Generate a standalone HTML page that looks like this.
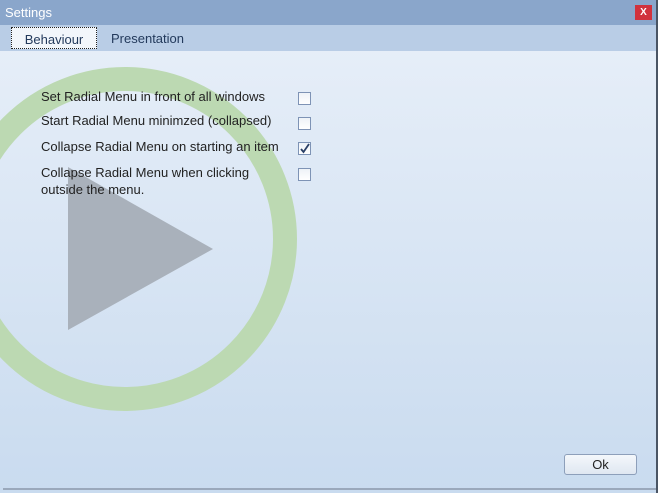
<!DOCTYPE html>
<html><head><meta charset="utf-8"><style>
body{margin:0;width:658px;height:493px;overflow:hidden;font-family:"Liberation Sans","Noto Sans CJK SC",sans-serif;background:#4a5564;}
.win{position:absolute;left:0;top:0;width:656px;height:493px;background:linear-gradient(#e9f0f9,#c9dbef);}
.title{position:absolute;left:0;top:0;width:656px;height:25px;background:#8aa6cb;color:#fff;font-size:13px;line-height:25px;padding-left:5px;box-sizing:border-box}
.x{position:absolute;right:4px;top:5px;width:17px;height:15px;background:#d1323d;color:#fff;font-size:10px;line-height:15px;text-align:center;font-weight:bold}
.tabs{position:absolute;left:0;top:25px;width:656px;height:26px;background:#b9cde6}
.tab{position:absolute;top:2px;height:22px;font-size:13px;color:#233a5c;line-height:24px}
.t1{left:11px;width:86px;background:#f2f6fb;border:1px dotted #222;box-sizing:border-box;text-align:center}
.t2{left:111px}
.lbl{position:absolute;left:41px;font-size:13px;color:#222;line-height:17px}
.cb{position:absolute;left:298px;width:13px;height:13px;border:1px solid #7e93b5;box-sizing:border-box;background:linear-gradient(#eef2f7,#fff)}
.ok{position:absolute;left:564px;top:454px;width:73px;height:21px;border:1px solid #8d9fba;border-radius:3px;box-sizing:border-box;background:linear-gradient(#f4f7fb,#dfe7f1);text-align:center;font-size:13px;line-height:19px;color:#222}
.bot{position:absolute;left:3px;top:488px;width:653px;height:2px;background:#9aa8bb}
</style></head><body>
<div class="win">
<svg width="656" height="493" style="position:absolute;left:0;top:0">
<circle cx="125" cy="239" r="160" fill="none" stroke="#bcd9b2" stroke-width="24"/>
<polygon points="68,167 213,249 68,330" fill="#a9b1bb"/>
</svg>
<div class="title">Settings<div class="x">X</div></div>
<div class="tabs"><div class="tab t1">Behaviour</div><div class="tab t2">Presentation</div></div>
<div class="lbl" style="top:88px">Set Radial Menu in front of all windows</div>
<div class="lbl" style="top:112px">Start Radial Menu minimzed (collapsed)</div>
<div class="lbl" style="top:138px">Collapse Radial Menu on starting an item</div>
<div class="lbl" style="top:164px">Collapse Radial Menu when clicking<br>outside the menu.</div>
<div class="cb" style="top:92px"></div>
<div class="cb" style="top:117px"></div>
<div class="cb" style="top:142px"><svg width="11" height="11" style="position:absolute;left:0;top:0"><path d="M2 6 L4.5 9 L10 1" fill="none" stroke="#2a3f66" stroke-width="1.8"/></svg></div>
<div class="cb" style="top:168px"></div>
<div class="ok">Ok</div>
<div class="bot"></div>
</div>
</body></html>
